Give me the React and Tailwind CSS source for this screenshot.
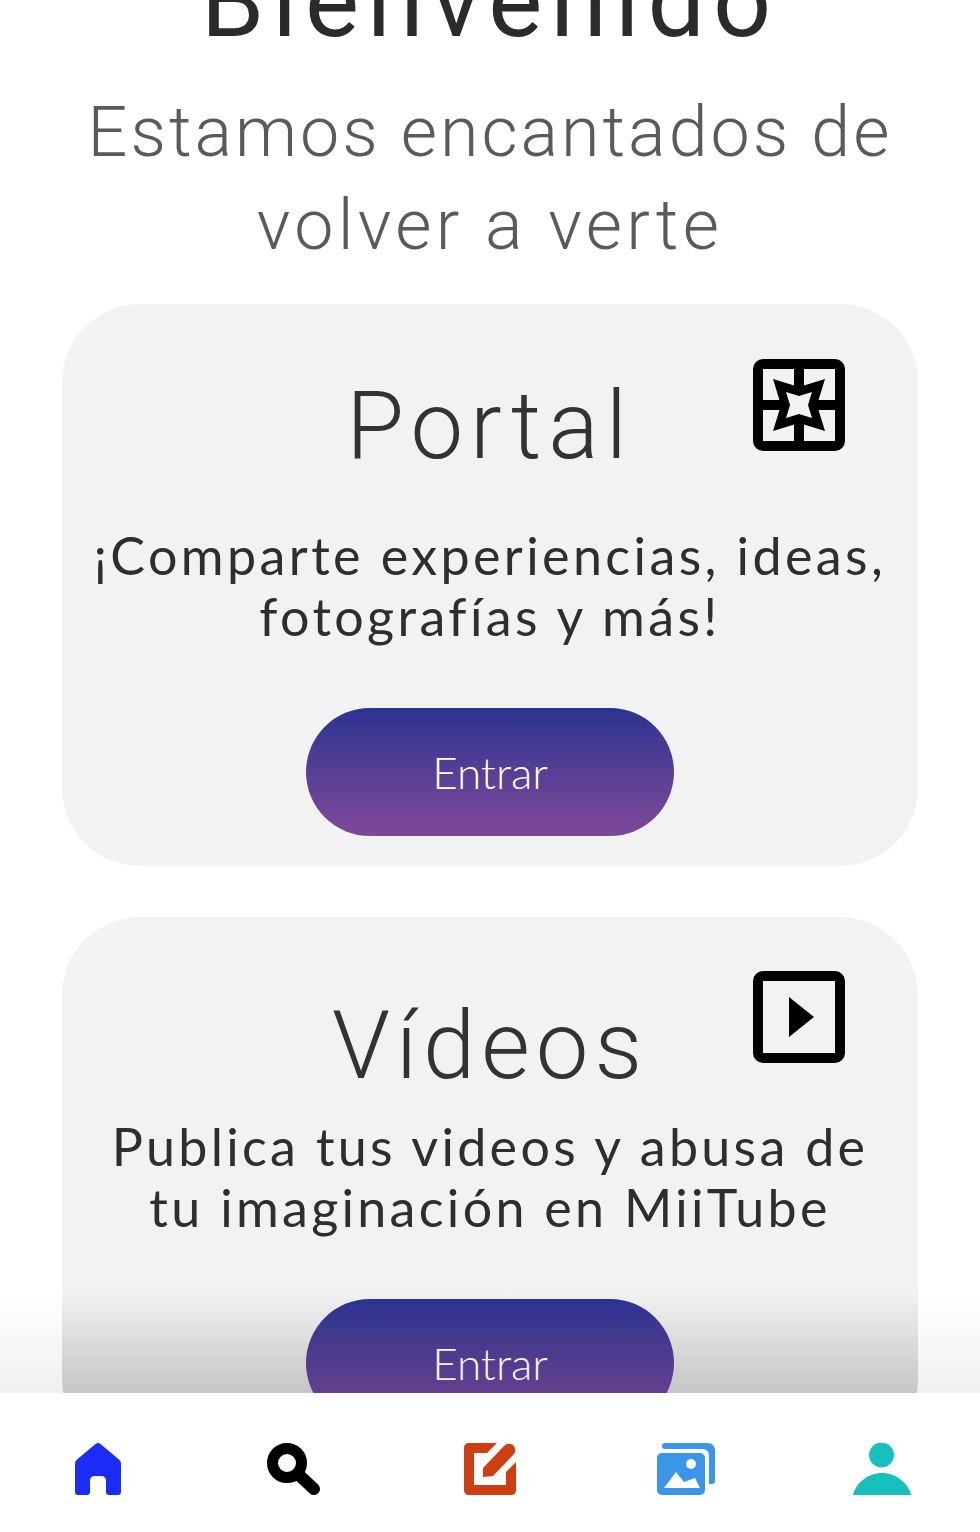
import React from "react";

const PortalIcon = () => (
  <svg width="92" height="92" viewBox="0 0 92 92" className="absolute right-[73px] top-[55px]">
    <rect x="5" y="5" width="82" height="82" rx="5" fill="none" stroke="#000" strokeWidth="10" />
    <path d="M46 5V87M5 46H87" stroke="#000" strokeWidth="10" />
    <path d="M20 20L46 28L72 20L64 46L72 72L46 64L20 72L28 46Z" fill="#000" />
    <path d="M33 33L46 37L59 33L55 46L59 59L46 55L33 59L37 46Z" fill="#f2f2f2" />
  </svg>
);

const PlayIcon = () => (
  <svg width="92" height="92" viewBox="0 0 92 92" className="absolute right-[73px] top-[54px]">
    <rect x="5" y="5" width="82" height="82" rx="5" fill="none" stroke="#000" strokeWidth="10" />
    <path d="M36 26L61 46L36 66Z" fill="#000" />
  </svg>
);

const HomeIcon = () => (
  <svg width="46" height="52" viewBox="0 0 46 52">
    <path d="M20.5 1Q23 -1 25.5 1L44 16.5Q46 18.5 46 21V49Q46 52 43 52H34Q31 52 31 49V38Q31 33 26 33H20Q15 33 15 38V49Q15 52 12 52H3Q0 52 0 49V21Q0 18.5 2 16.5Z" fill="#1a2cf5" />
  </svg>
);

const SearchIcon = () => (
  <svg width="54" height="52" viewBox="0 0 54 52">
    <circle cx="20" cy="20" r="14.5" fill="none" stroke="#000" strokeWidth="11" />
    <path d="M32 32L47 46" stroke="#000" strokeWidth="12" strokeLinecap="round" />
  </svg>
);

const EditIcon = () => (
  <svg width="52" height="52" viewBox="0 0 52 52">
    <path d="M5 0H33L23 10H10V42H42V29L52 19V47Q52 52 47 52H5Q0 52 0 47V5Q0 0 5 0Z" fill="#cb3f13" />
    <path d="M19 25L40 3Q44 -1 49 2Q53 6 50 11L29 33L19 34Z" fill="#cb3f13" />
  </svg>
);

const GalleryIcon = () => (
  <svg width="58" height="52" viewBox="0 0 58 52">
    <path d="M8 0H50Q58 0 58 8V38Q58 41 55 41H52V13Q52 6 45 6H8Q5 6 5 3Q5 0 8 0Z" fill="#3b96e8" />
    <rect x="0" y="10" width="48" height="42" rx="5" fill="#3b96e8" />
    <circle cx="34" cy="21" r="5" fill="#fff" />
    <path d="M7 45L19 29L27 39L38 35L43 45Z" fill="#fff" />
  </svg>
);

const UserIcon = () => (
  <svg width="58" height="52" viewBox="0 0 58 52">
    <circle cx="28.5" cy="12" r="12.5" fill="#17bfbd" />
    <path d="M0 52C3 39 16 30 29 30C42 30 55 39 58 52Z" fill="#17bfbd" />
  </svg>
);

const EnterButton = () => (
  <button className="flex h-32 w-[368px] items-center justify-center rounded-full bg-gradient-to-b from-[#2b3290] to-[#7f4899] font-['Lato',sans-serif] text-[44px] font-light text-white">
    Entrar
  </button>
);

const navIcons = [HomeIcon, SearchIcon, EditIcon, GalleryIcon, UserIcon];

const App = () => {
  return (
    <div className="flex h-[1532px] w-[980px] flex-col overflow-hidden bg-white">
      <div className="relative h-[1393px] overflow-hidden">
        <h1 className="mt-[-45px] h-[92px] text-center font-['Roboto',sans-serif] text-[102px] font-normal leading-[92px] tracking-[8px] text-[#2b2b2b]">
          Bienvenido
        </h1>
        <p className="mt-[39px] text-center font-['Roboto',sans-serif] text-[70px] font-light leading-[93px] tracking-[3px] text-[#5a5a5a]">
          Estamos encantados de
          <br />
          <span className="tracking-[4.3px]">volver a verte</span>
        </p>

        <div className="relative mx-[62px] mt-[32px] h-[562px] rounded-[78px] bg-[#f2f2f2] pt-[72px]">
          <PortalIcon />
          <h2 className="text-center font-['Roboto',sans-serif] text-[94px] font-light leading-[100px] tracking-[7px] text-[#333]">
            Portal
          </h2>
          <p className="mt-[49px] text-center font-['Lato',sans-serif] text-[52px] leading-[61px] tracking-[3.4px] text-[#2e2e2e]">
            ¡Comparte experiencias, ideas,
            <br />
            fotografías y más!
          </p>
          <div className="mt-[61px] flex justify-center">
            <EnterButton />
          </div>
        </div>

        <div className="relative mx-[62px] mt-[51px] h-[540px] rounded-[78px] bg-[linear-gradient(#f2f2f2_0,#f2f2f2_373px,#d2d2d2_476px)] pt-[79px]">
          <PlayIcon />
          <h2 className="text-center font-['Roboto',sans-serif] text-[94px] font-light leading-[100px] tracking-[6px] text-[#333]">
            Vídeos
          </h2>
          <p className="mt-[20px] text-center font-['Lato',sans-serif] text-[52px] leading-[61px] tracking-[3.3px] text-[#2e2e2e]">
            Publica tus videos y abusa de
            <br />
            tu imaginación en MiiTube
          </p>
          <div className="mt-[61px] flex justify-center">
            <EnterButton />
          </div>
        </div>

        <div className="absolute inset-x-0 bottom-0 h-[100px] bg-gradient-to-b from-transparent to-black/6" />
      </div>

      <nav className="grid h-[139px] grid-cols-5 items-start bg-white pt-[50px]">
        {navIcons.map((Icon, i) => (
          <div key={i} className="flex justify-center">
            <Icon />
          </div>
        ))}
      </nav>
    </div>
  );
};

export default App;
